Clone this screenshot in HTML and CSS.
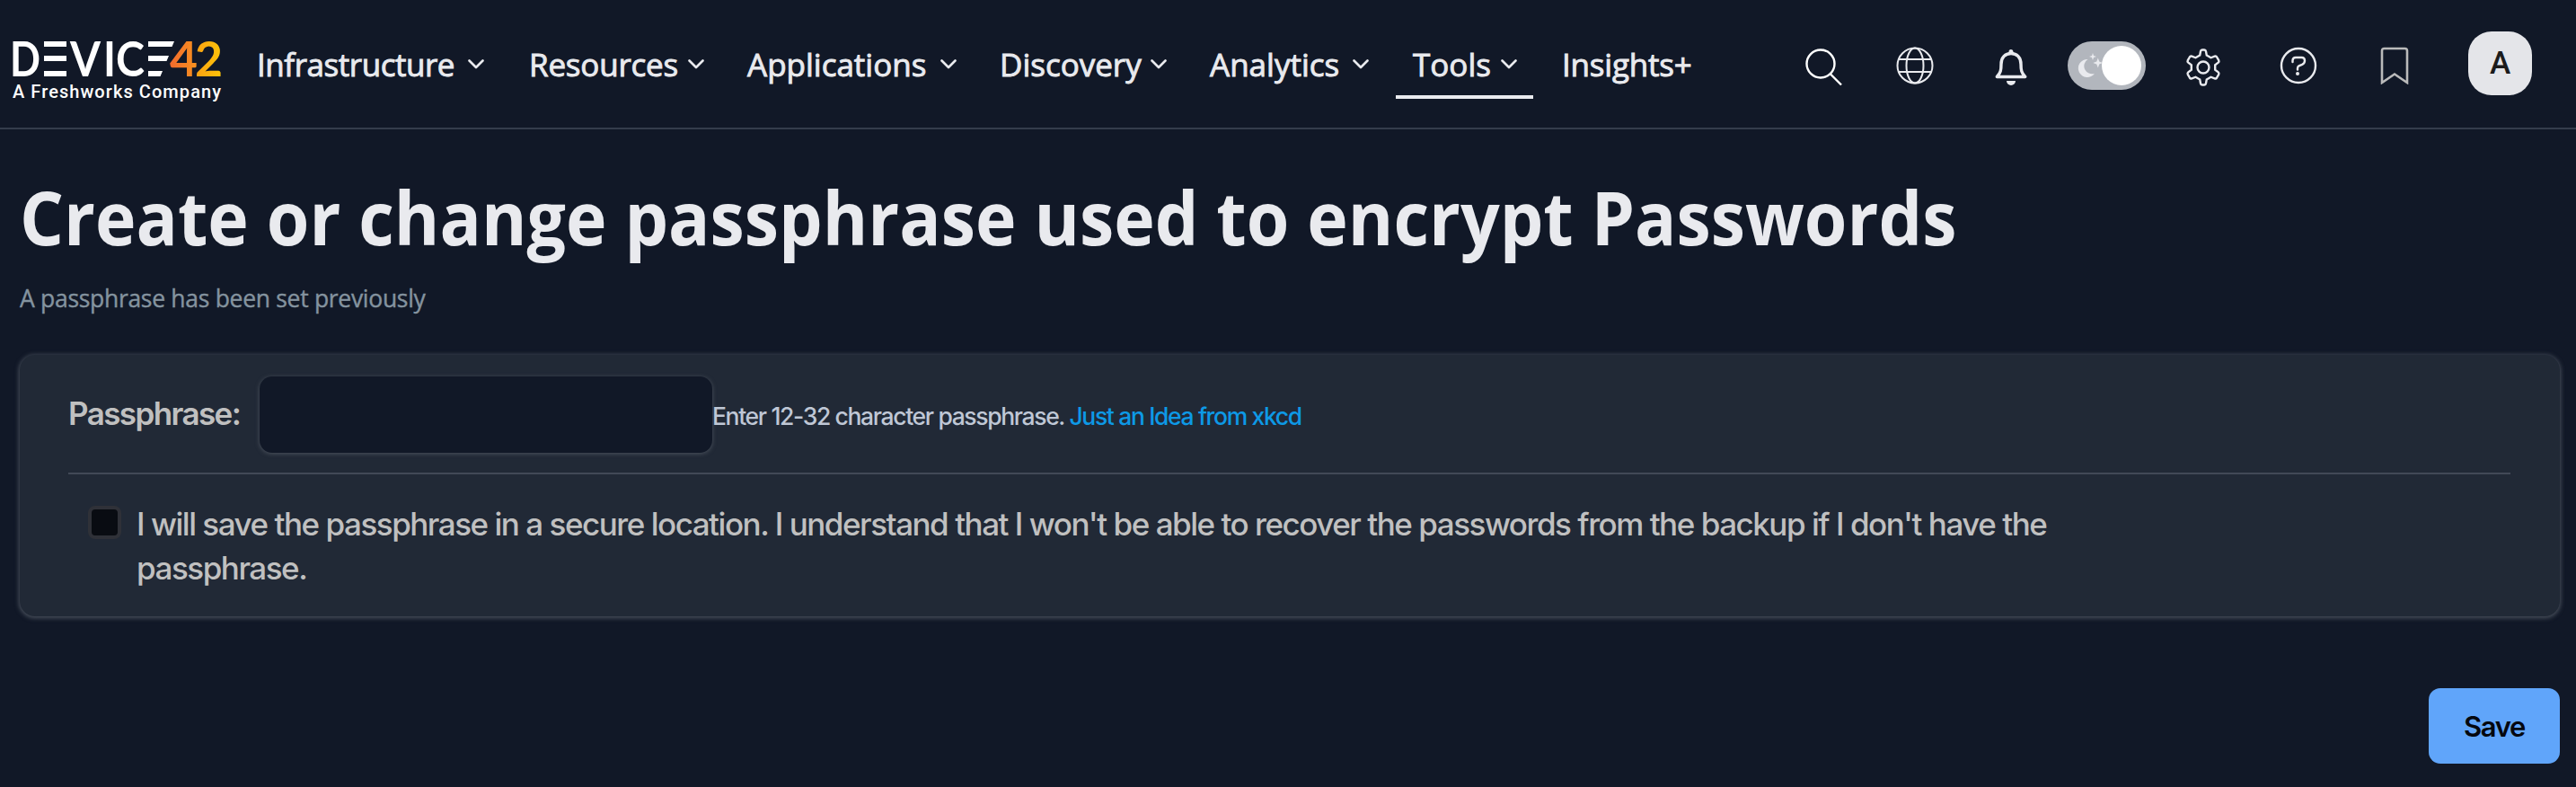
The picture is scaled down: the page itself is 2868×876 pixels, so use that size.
FILE: index.html
```
<!DOCTYPE html>
<html lang="en">
<head>
<meta charset="utf-8">
<title>Create or change passphrase</title>
<link rel="stylesheet" href="styles.css">
</head>
<body>
<header class="topbar">
  <svg class="logo" width="240" height="84" viewBox="0 0 240 84" role="img" aria-label="Device42, a Freshworks company">
    <defs>
      <linearGradient id="g4" x1="0" x2="1"><stop offset="0" stop-color="#f26a2e"/><stop offset="1" stop-color="#f7931e"/></linearGradient>
      <linearGradient id="g2" x1="0" x2="1"><stop offset="0" stop-color="#fba013"/><stop offset="1" stop-color="#fdc608"/></linearGradient>
    </defs>
    <g class="logo-letters">
      <text x="3" y="47" textLength="34" lengthAdjust="spacingAndGlyphs">D</text>
      <text x="70" y="47" textLength="34" lengthAdjust="spacingAndGlyphs">V</text>
      <text x="107" y="47" textLength="14" lengthAdjust="spacingAndGlyphs">I</text>
      <text x="121" y="47" textLength="32" lengthAdjust="spacingAndGlyphs">C</text>
      <text x="181" y="47" textLength="31" lengthAdjust="spacingAndGlyphs" fill="url(#g4)">4</text>
      <text x="209" y="47" textLength="31" lengthAdjust="spacingAndGlyphs" fill="url(#g2)">2</text>
    </g>
    <g fill="#fff">
      <rect x="41" y="8" width="25" height="6"/><rect x="41" y="24" width="25" height="6"/><rect x="41" y="41" width="25" height="6"/>
      <path d="M157 8h29l-2.500 6H157zM157 24h23l-2.500 6H157zM157 41h16l-2.500 6H157z"/>
    </g>
    <text class="logo-tag" x="6" y="71" textLength="232">A Freshworks Company</text>
  </svg>
  <nav class="nav">
    <a class="nav-item first"><span>Infrastructure</span><svg class="chev" viewBox="0 0 18 11"><path d="M1.500 1.500 9 9l7.500-7.500"/></svg></a>
    <a class="nav-item inset"><span>Resources</span><svg class="chev" viewBox="0 0 18 11"><path d="M1.500 1.500 9 9l7.500-7.500"/></svg></a>
    <a class="nav-item"><span>Applications</span><svg class="chev" viewBox="0 0 18 11"><path d="M1.500 1.500 9 9l7.500-7.500"/></svg></a>
    <a class="nav-item"><span>Discovery</span><svg class="chev" viewBox="0 0 18 11"><path d="M1.500 1.500 9 9l7.500-7.500"/></svg></a>
    <a class="nav-item"><span>Analytics</span><svg class="chev" viewBox="0 0 18 11"><path d="M1.500 1.500 9 9l7.500-7.500"/></svg></a>
    <a class="nav-item active"><span>Tools</span><svg class="chev" viewBox="0 0 18 11"><path d="M1.500 1.500 9 9l7.500-7.500"/></svg></a>
    <a class="nav-item inset"><span>Insights+</span></a>
  </nav>
  <div class="tools">
    <svg class="search" width="42" height="42" viewBox="0 0 42 42"><circle cx="17" cy="17" r="15.500"/><path d="M28 28.500 40 40.500"/></svg>
    <svg class="globe" width="42" height="42" viewBox="0 0 42 42"><circle cx="21" cy="21" r="19.500"/><ellipse cx="21" cy="21" rx="9.500" ry="19.500"/><path d="M2.500 14h37M2.500 28h37"/></svg>
    <svg class="bell" width="36" height="42" viewBox="0 0 36 42"><path class="line" d="M2.300 31.500C6.500 27 7 24 7 17.500 7 10 11.500 5.500 18 5.500S29 10 29 17.500c0 6.500.5 9.500 4.700 14z"/><path class="solid" d="M15.500 5V3.500a2.500 2.500 0 0 1 5 0V5zM13 36h10a5 5 0 0 1-10 0z"/></svg>
    <div class="toggle"><svg width="28" height="28" viewBox="0 0 28 28"><path d="M11.500 7A10 10 0 1 0 19 22.800 8.800 8.800 0 0 1 11.500 7zM17 0l1 2.900 3 1-3 1L17 8l-1-3.100-3-1 3-1zM22.800 5.500l1.400 4 4 1.500-4 1.400-1.400 4.200-1.500-4.200-4-1.400 4-1.500z"/></svg><i class="knob"></i></div>
    <svg class="gear" width="40" height="42" viewBox="0 0 40 42"><path d="M16.200 7.600 17 3.200Q17.300 1.500 18.800 1.500h2.400Q22.700 1.500 23 3.200L23.800 7.600 28.500 10.300 32.700 8.700Q34.300 8.200 35.100 9.500L37.200 13.100Q37.900 14.500 36.700 15.600L33.200 18.400V23.600L36.700 26.400Q37.900 27.500 37.200 28.900L35.100 32.500Q34.300 33.800 32.700 33.300L28.500 31.700 23.800 34.400 23 38.800Q22.700 40.500 21.200 40.500H18.800Q17.300 40.500 17 38.800L16.200 34.400 11.500 31.700 7.300 33.300Q5.700 33.800 4.900 32.500L2.800 28.900Q2.100 27.500 3.300 26.400L6.800 23.600V18.400L3.300 15.600Q2.100 14.500 2.800 13.100L4.900 9.500Q5.700 8.200 7.300 8.700L11.500 10.300z"/><circle cx="20" cy="21" r="6.500"/></svg>
    <svg class="help" width="42" height="42" viewBox="0 0 42 42"><circle cx="21" cy="21" r="19"/><path d="M14.500 17v-1.500Q14.500 12 18 12h6.500Q28 12 28 15.500q0 3-3 4.400l-3.500 1.500Q20 22.200 20 24v1.500"/><circle class="dot" cx="20" cy="30" r="2"/></svg>
    <svg class="mark" width="32" height="42" viewBox="0 0 32 42"><path d="M2 40V4.500Q2 2 4.500 2h23Q30 2 30 4.500V40L16 30.500z"/></svg>
    <div class="avatar">A</div>
  </div>
</header>
<main class="page">
  <h1 class="title">Create or change passphrase used to encrypt Passwords</h1>
  <p class="subtitle">A passphrase has been set previously</p>
  <section class="card">
    <div class="field-row">
      <label class="label" for="pass">Passphrase:</label>
      <input class="field" id="pass" type="password">
      <p class="hint">Enter 12-32 character passphrase. <a class="link">Just an Idea from xkcd</a></p>
    </div>
    <div class="confirm-row">
      <span class="check"></span>
      <p class="confirm">I will save the passphrase in a secure location. I understand that I won't be able to recover the passwords from the backup if I don't have the passphrase.</p>
    </div>
  </section>
  <div class="actions"><button class="save">Save</button></div>
</main>
</body>
</html>
```
FILE: styles.css
```
* { box-sizing: border-box; }
body {
  margin: 0;
  height: 876px;
  overflow: hidden;
  background: #111827;
  color: #e9eaee;
  font-family: "Inter", sans-serif;
}
p, h1 { margin: 0; }

.topbar {
  display: flex;
  height: 144px;
  padding: 0 49px 0 8px;
  border-bottom: 2px solid #343c4b;
}
.logo { flex: none; margin-top: 38px; overflow: visible; }
.logo-letters { font: 700 54px "Lato", sans-serif; fill: #fff; }
.logo-tag { font: 500 20px "Roboto", sans-serif; fill: #fff; }

.nav {
  display: grid;
  grid-template-columns: 291px 233px 269px 222px 213px 153px 180px;
  gap: 12px;
  height: 110px;
  margin-left: 18px;
}
.nav-item {
  display: flex;
  align-items: center;
  justify-content: space-between;
  padding: 37px 18px 0;
  border-bottom: 4px solid transparent;
  font: 500 35px/1 "Open Sans", sans-serif;
  -webkit-text-stroke: 0.9px #e9eaee;
}
.nav-item.first { padding-left: 20px; letter-spacing: -0.45px; }
.nav-item.inset { padding-left: 20px; letter-spacing: -0.2px; }
.nav-item.active { padding-left: 19px; border-color: #e9eaee; }
.chev { width: 18px; height: 11px; fill: none; stroke: #e9eaee; stroke-width: 2.6; stroke-linecap: round; stroke-linejoin: round; }

.tools {
  display: flex;
  align-items: flex-start;
  margin-left: auto;
  padding-top: 52px;
  fill: none;
  stroke: #e9eaee;
  stroke-width: 2.2;
}
.tools > * { flex: none; }
.search { margin: 2px 59px 0 0; stroke: #fff; stroke-width: 2.4; }
.globe { margin-right: 68px; stroke-width: 2; }
.bell { margin: 2px 45px 0 0; }
.bell .line { stroke-width: 3.4; stroke-linejoin: round; }
.bell .solid, .help .dot { fill: #e9eaee; stroke: none; }
.toggle {
  display: flex;
  align-items: center;
  justify-content: space-between;
  width: 87px;
  height: 54px;
  margin: -6px 44px 0 0;
  padding: 0 5px 0 11px;
  border-radius: 27px;
  background: #b2b6bd;
}
.toggle svg { fill: #e9eaee; stroke: none; }
.knob { width: 44px; height: 44px; margin-left: -2px; border-radius: 50%; background: #fff; }
.gear { margin: 2px 65px 0 0; stroke-width: 2.4; }
.help { margin-right: 70px; stroke-width: 2.4; stroke-linecap: round; }
.mark { margin-right: 66px; stroke: #bababa; stroke-width: 2.6; }
.avatar {
  width: 71px;
  height: 71px;
  margin-top: -17px;
  border-radius: 26px;
  background: #e4e5e9;
  color: #1b1b1b;
  font: 500 35px/71px "Roboto", sans-serif;
  text-align: center;
}

.page { padding: 0 18px 0 22px; }
.title {
  height: 168px;
  padding-top: 35px;
  font: 700 83px/124px "Open Sans", sans-serif;
  white-space: nowrap;
  transform: scaleX(0.927);
  transform-origin: left;
}
.subtitle {
  height: 83px;
  color: #84939f;
  font: 400 26.5px/40px "Open Sans", sans-serif;
  letter-spacing: -0.3px;
  -webkit-text-stroke: 0.4px #84939f;
}
.card {
  height: 291px;
  padding: 0 55px 0 54px;
  border-radius: 17px;
  background: #212936;
  box-shadow: 0 1px 5px 1px #4a515d;
}
.field-row {
  display: flex;
  height: 133px;
  padding-top: 24px;
  border-bottom: 2px solid #424957;
}
.label { width: 213px; color: #c0c0c0; font: 600 35px/82px "Inter", sans-serif; letter-spacing: -1.6px; }
.field {
  width: 504px;
  height: 85px;
  border: 0;
  border-radius: 14px;
  background: #111827;
  box-shadow: 0 1px 5px #4c535e;
}
.hint { color: #bfc7d5; font: 500 26.5px/88px "Inter", sans-serif; letter-spacing: -1.36px; }
.link { color: #0d99e6; }
.confirm-row { display: flex; gap: 17px; padding: 31px 0 0 22px; }
.check { flex: none; width: 37px; height: 37px; margin-top: 4px; border: 4px solid #2f3138; border-radius: 8px; background: #090c12; }
.confirm { width: 2180px; color: #c0c0c0; font: 500 35px/49px "Inter", sans-serif; letter-spacing: -1.475px; }
.actions { display: flex; justify-content: flex-end; padding-top: 80px; }
.save {
  width: 146px;
  height: 84px;
  border: 0;
  border-radius: 13px;
  background: #60a5fa;
  color: #05080f;
  font: 600 31px "Inter", sans-serif;
  letter-spacing: -1.4px;
}
```
